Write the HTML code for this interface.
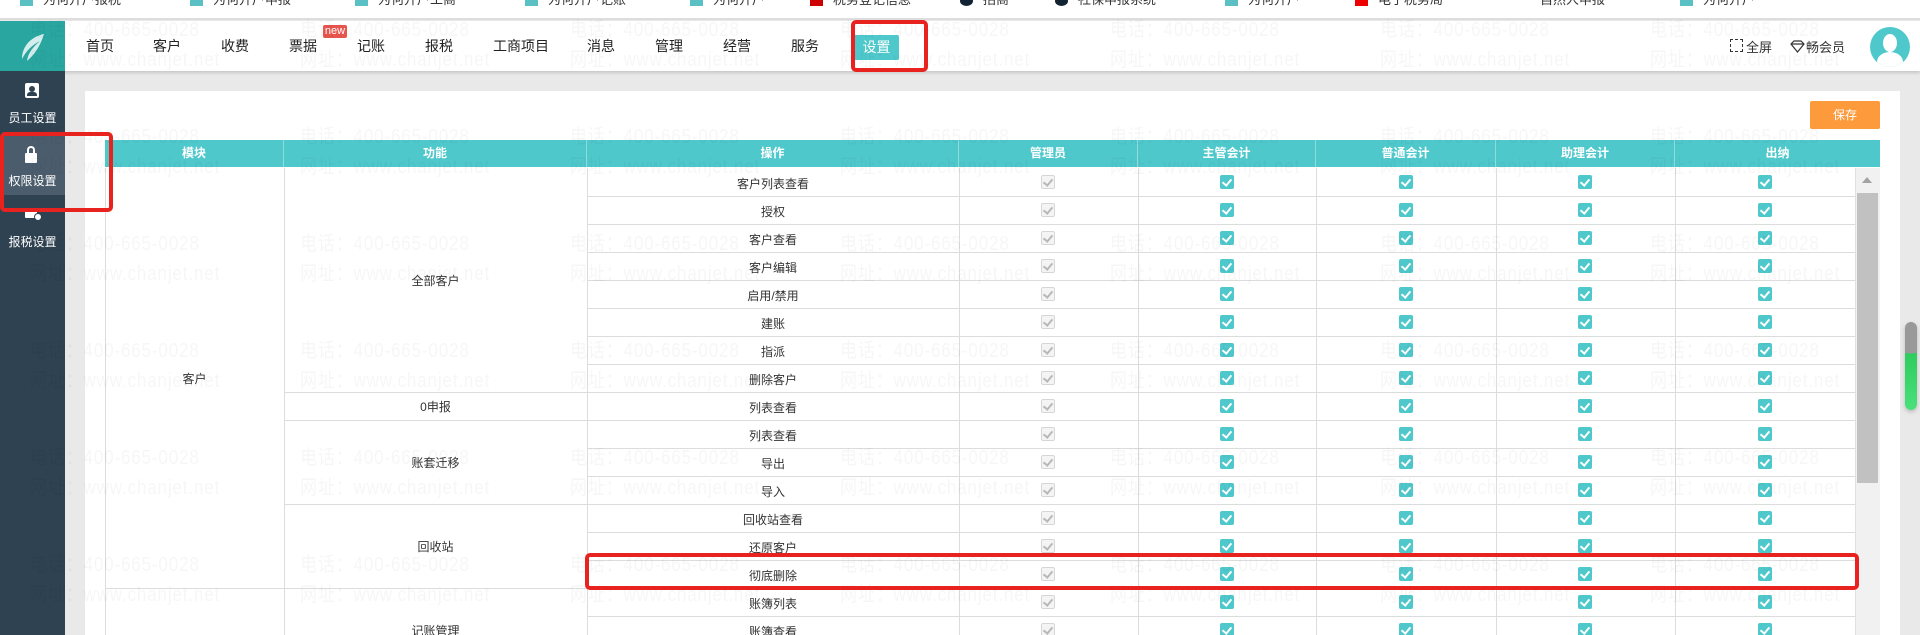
<!DOCTYPE html>
<html style="width:1920px;height:635px;overflow:hidden"><head><meta charset="utf-8">
<style>
*{margin:0;padding:0;box-sizing:border-box}
body{width:1920px;height:635px;overflow:hidden;background:#e9e9e9;font-family:"Liberation Sans","Noto Sans CJK SC",sans-serif;position:relative;color:#333}
.abs{position:absolute}
#top{left:0;top:0;width:1920px;height:20px;background:#fff;border-bottom:2px solid #ddd;overflow:hidden}
.bm{position:absolute;top:-11px;font-size:13px;color:#333;white-space:nowrap}
.bi{display:inline-block;width:13px;height:10px;background:#5bc0c4;margin-right:10px;vertical-align:middle}
#hdr{left:0;top:21px;width:1920px;height:50px;background:#fff;box-shadow:0 2px 3px rgba(0,0,0,.15)}
#logo{left:0;top:21px;width:65px;height:50px;background:#2aa6a1}
.nav{position:absolute;top:36px;font-size:14px;color:#222}
#side{left:0;top:71px;width:65px;height:564px;background:#2f4252}
.si{position:absolute;left:0;width:65px;text-align:center;color:#fff;font-size:12px}
#panel{left:85px;top:91px;width:1815px;height:544px;background:#fff}
.th{position:absolute;top:140px;height:27px;background:#4fc8cc;color:#fff;font-size:12px;font-weight:bold;text-align:center;line-height:27px;border-right:1px solid #8fdcdf}
.cell{position:absolute;font-size:12px;color:#333;text-align:center}
.hl{position:absolute;height:1px;background:#dcdcdc}
.vl{position:absolute;width:1px;background:#dcdcdc}
.cb{position:absolute;width:14px;height:14px;border-radius:2px;background:#4fc8cc}
.cb::after{content:"";position:absolute;left:4px;top:2px;width:4px;height:7px;border:solid #fff;border-width:0 2px 2px 0;transform:rotate(40deg)}
.cg{background:#f4f4f4;border:1px solid #d6d6d6}
.cg::after{border-color:#b8b8b8;left:3px;top:1px}
.wm{position:absolute;font-size:20px;line-height:30px;color:rgba(0,0,0,.035);white-space:nowrap;letter-spacing:1px;pointer-events:none;transform:scaleX(.85);transform-origin:left}
.red{position:absolute;border:4px solid #e8231f;border-radius:5px}
#clip{position:absolute;left:0;top:0;width:1920px;height:635px;overflow:hidden}
</style></head><body>
<div id="clip">
<div id="top" class="abs">
 <div class="bm" style="left:20px"><span class="bi"></span>为何开户报税</div>
 <div class="bm" style="left:190px"><span class="bi"></span>为何开户申报</div>
 <div class="bm" style="left:355px"><span class="bi"></span>为何开户工商</div>
 <div class="bm" style="left:525px"><span class="bi"></span>为何开户记账</div>
 <div class="bm" style="left:690px"><span class="bi"></span>为何开户</div>
 <div class="bm" style="left:810px"><span class="bi" style="background:#c00"></span>税务登记信息</div>
 <div class="bm" style="left:960px"><span class="bi" style="background:#123;border-radius:50%"></span>招商</div>
 <div class="bm" style="left:1055px"><span class="bi" style="background:#123;border-radius:50%"></span>社保申报系统</div>
 <div class="bm" style="left:1225px"><span class="bi"></span>为何开户</div>
 <div class="bm" style="left:1355px"><span class="bi" style="background:#e00"></span>电子税务局</div>
 <div class="bm" style="left:1540px">自然人申报</div>
 <div class="bm" style="left:1680px"><span class="bi"></span>为何开户</div>
</div>
<div id="hdr" class="abs"></div>
<div id="logo" class="abs"><svg width="65" height="50"><path d="M44 13 C30 16 22 26 22 38 C26 30 32 24 40 20 C33 26 28 32 27 40 C34 34 40 26 44 13Z" fill="#e8f6f5" opacity=".9"/></svg></div>
<div class="nav" style="left:86px">首页</div>
<div class="nav" style="left:153px">客户</div>
<div class="nav" style="left:221px">收费</div>
<div class="nav" style="left:289px">票据</div>
<div class="abs" style="left:323px;top:25px;width:24px;height:13px;background:#e8554e;color:#fff;font-size:11px;line-height:13px;text-align:center;border-radius:2px">new</div>
<div class="nav" style="left:357px">记账</div>
<div class="nav" style="left:425px">报税</div>
<div class="nav" style="left:493px">工商项目</div>
<div class="nav" style="left:587px">消息</div>
<div class="nav" style="left:655px">管理</div>
<div class="nav" style="left:723px">经营</div>
<div class="nav" style="left:791px">服务</div>
<div class="abs" style="left:854px;top:35px;width:45px;height:25px;background:#4fc8cc;color:#fff;font-size:14px;line-height:25px;text-align:center;border-radius:2px">设置</div>
<div class="abs" style="left:1730px;top:39px;width:13px;height:13px;border:1.5px dashed #333"></div>
<div class="abs" style="left:1746px;top:37px;font-size:13px">全屏</div>
<svg class="abs" style="left:1790px;top:40px" width="15" height="13"><path d="M1 4 L4 1 H11 L14 4 L7.5 12 Z M1 4 H14" fill="none" stroke="#333" stroke-width="1.2"/></svg>
<div class="abs" style="left:1806px;top:37px;font-size:13px">畅会员</div>
<div class="abs" style="left:1870px;top:27px;width:40px;height:40px;border-radius:50%;background:#4fc8cc;overflow:hidden"><div class="abs" style="left:13px;top:7px;width:14px;height:18px;border-radius:50%;background:#fff"></div><div class="abs" style="left:7px;top:25px;width:26px;height:20px;border-radius:50% 50% 0 0;background:#fff"></div></div>

<div id="side" class="abs"></div>
<div class="abs" style="left:3px;top:132px;width:62px;height:63px;background:#4b5d6d"></div>
<div class="abs" style="left:25px;top:83px;width:14px;height:15px;background:#fff;border-radius:2px"><div class="abs" style="left:4px;top:3px;width:6px;height:6px;border-radius:50%;background:#2f4252"></div><div class="abs" style="left:2px;top:9px;width:10px;height:4px;background:#2f4252;border-radius:3px 3px 0 0"></div></div>
<div class="si" style="top:109px">员工设置</div>
<div class="abs" style="left:27px;top:146px;width:8px;height:8px;border:2px solid #fff;border-bottom:none;border-radius:4px 4px 0 0"></div>
<div class="abs" style="left:25px;top:153px;width:12px;height:10px;background:#fff;border-radius:1px"></div>
<div class="si" style="top:172px">权限设置</div>
<div class="abs" style="left:25px;top:208px;width:12px;height:10px;background:#fff;border-radius:1px"></div>
<div class="abs" style="left:34px;top:213px;width:8px;height:8px;background:#fff;border:1.5px solid #2f4252;border-radius:50%"></div>
<div class="si" style="top:233px">报税设置</div>

<div id="panel" class="abs"></div>
<div class="abs" style="left:1810px;top:101px;width:70px;height:28px;background:#fd9a3b;color:#fff;font-size:12px;line-height:28px;text-align:center;border-radius:2px">保存</div>

<div class="th" style="left:105px;width:179px">模块</div>
<div class="th" style="left:284px;width:303px">功能</div>
<div class="th" style="left:587px;width:372px">操作</div>
<div class="th" style="left:959px;width:179px">管理员</div>
<div class="th" style="left:1138px;width:178px">主管会计</div>
<div class="th" style="left:1316px;width:180px">普通会计</div>
<div class="th" style="left:1496px;width:179px">助理会计</div>
<div class="th" style="left:1675px;width:205px;border-right:none">出纳</div>

<div id="tb"></div>
<div class="abs" style="left:1855px;top:168px;width:25px;height:467px;background:#f1f1f1;border-left:1px solid #e0e0e0"></div>
<div class="abs" style="left:1862px;top:177px;width:0;height:0;border-left:5px solid transparent;border-right:5px solid transparent;border-bottom:6px solid #a3a3a3"></div>
<div class="abs" style="left:1857px;top:193px;width:21px;height:290px;background:#c1c1c1"></div>
<div class="abs" style="left:1905px;top:322px;width:12px;height:88px;border-radius:6px;background:linear-gradient(#999 0,#999 35%,#2ecc5f 36%,#4ae07a 100%);box-shadow:0 2px 4px rgba(0,0,0,.2)"></div>

<div id="wm"></div>
<div class="red" style="left:851px;top:20px;width:77px;height:52px"></div>
<div class="red" style="left:0px;top:132px;width:113px;height:80px"></div>
<div class="red" style="left:585px;top:553px;width:1274px;height:37px"></div>
</div>
<script>
var ops=["客户列表查看","授权","客户查看","客户编辑","启用/禁用","建账","指派","删除客户","列表查看","列表查看","导出","导入","回收站查看","还原客户","彻底删除","账簿列表","账簿查看"];
var h="",T=168,R=28;
for(var i=0;i<ops.length;i++){var y=T+i*R;
 h+='<div class="cell" style="left:587px;width:372px;top:'+(y+7)+'px">'+ops[i]+'</div>';
 h+='<div class="hl" style="left:587px;width:1268px;top:'+(y+R)+'px"></div>';
 h+='<div class="cb cg" style="left:1041px;top:'+(y+7)+'px"></div>';
 [1227,1406,1585,1765].forEach(function(c){h+='<div class="cb" style="left:'+(c-7)+'px;top:'+(y+7)+'px"></div>';});
}
[[0,8,"全部客户"],[8,1,"0申报"],[9,3,"账套迁移"],[12,3,"回收站"],[15,3,"记账管理"]].forEach(function(f){
 var y=T+f[0]*R,hh=f[1]*R;
 h+='<div class="cell" style="left:284px;width:303px;top:'+(y+hh/2-8)+'px">'+f[2]+'</div>';
 h+='<div class="hl" style="left:284px;width:303px;top:'+(y+hh)+'px"></div>';
});
h+='<div class="cell" style="left:105px;width:179px;top:'+(T+15*R/2-8)+'px">客户</div>';
h+='<div class="hl" style="left:105px;width:179px;top:'+(T+15*R)+'px"></div>';
[105,284,587,959,1138,1316,1496,1675].forEach(function(x){h+='<div class="vl" style="left:'+x+'px;top:168px;height:467px"></div>';});
document.getElementById("tb").innerHTML=h;
var w="";
for(var r=0;r<6;r++)for(var c=0;c<8;c++){
 w+='<div class="wm" style="left:'+(30+c*270)+'px;top:'+(15+r*107)+'px">电话：400-665-0028<br>网址：www.chanjet.net</div>';
}
document.getElementById("wm").innerHTML=w;
</script>
</body></html>
